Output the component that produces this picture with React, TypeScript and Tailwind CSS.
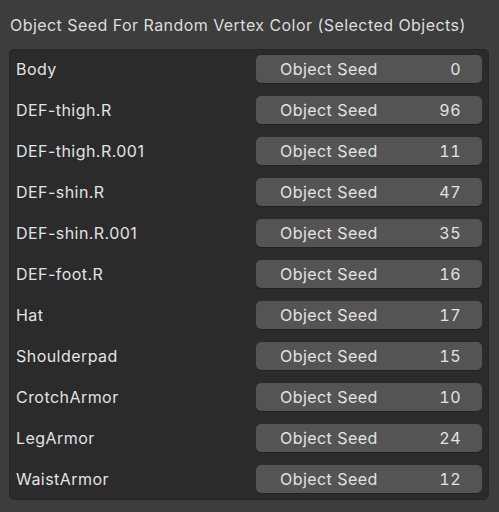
const rows: [string, number][] = [
  ['Body', 0],
  ['DEF-thigh.R', 96],
  ['DEF-thigh.R.001', 11],
  ['DEF-shin.R', 47],
  ['DEF-shin.R.001', 35],
  ['DEF-foot.R', 16],
  ['Hat', 17],
  ['Shoulderpad', 15],
  ['CrotchArmor', 10],
  ['LegArmor', 24],
  ['WaistArmor', 12],
];

export default function App() {
  return (
    <div
      className="w-[499px] h-[512px] bg-[#3d3d3d] text-[#e2e2e2] overflow-hidden tracking-[0.45px]"
      style={{ fontFamily: 'Inter, "Noto Sans", sans-serif' }}
    >
      <div className="h-[49px] pl-[10px] pt-[13px] text-[16px] leading-[24px] text-[#dcdcdc]">
        Object Seed For Random Vertex Color (Selected Objects)
      </div>
      <div className="ml-[9px] w-[480px] h-[451px] rounded-[5px] bg-[#2b2b2b] border border-[#262626] pt-[5px] flex flex-col gap-[13px]">
        {rows.map(([name, seed]) => (
          <div key={name} className="flex items-center h-[28px]">
            <div className="pl-[6px] w-[246px] text-[16px]">{name}</div>
            <div className="w-[226px] h-[28px] rounded-[5px] bg-[#545454] shadow-[0_1px_0_#222] flex items-center pl-[24px] pr-[21px] text-[16px]">
              <span className="flex-1">Object Seed</span>
              <span className="tabular-nums">{seed}</span>
            </div>
          </div>
        ))}
      </div>
    </div>
  );
}
